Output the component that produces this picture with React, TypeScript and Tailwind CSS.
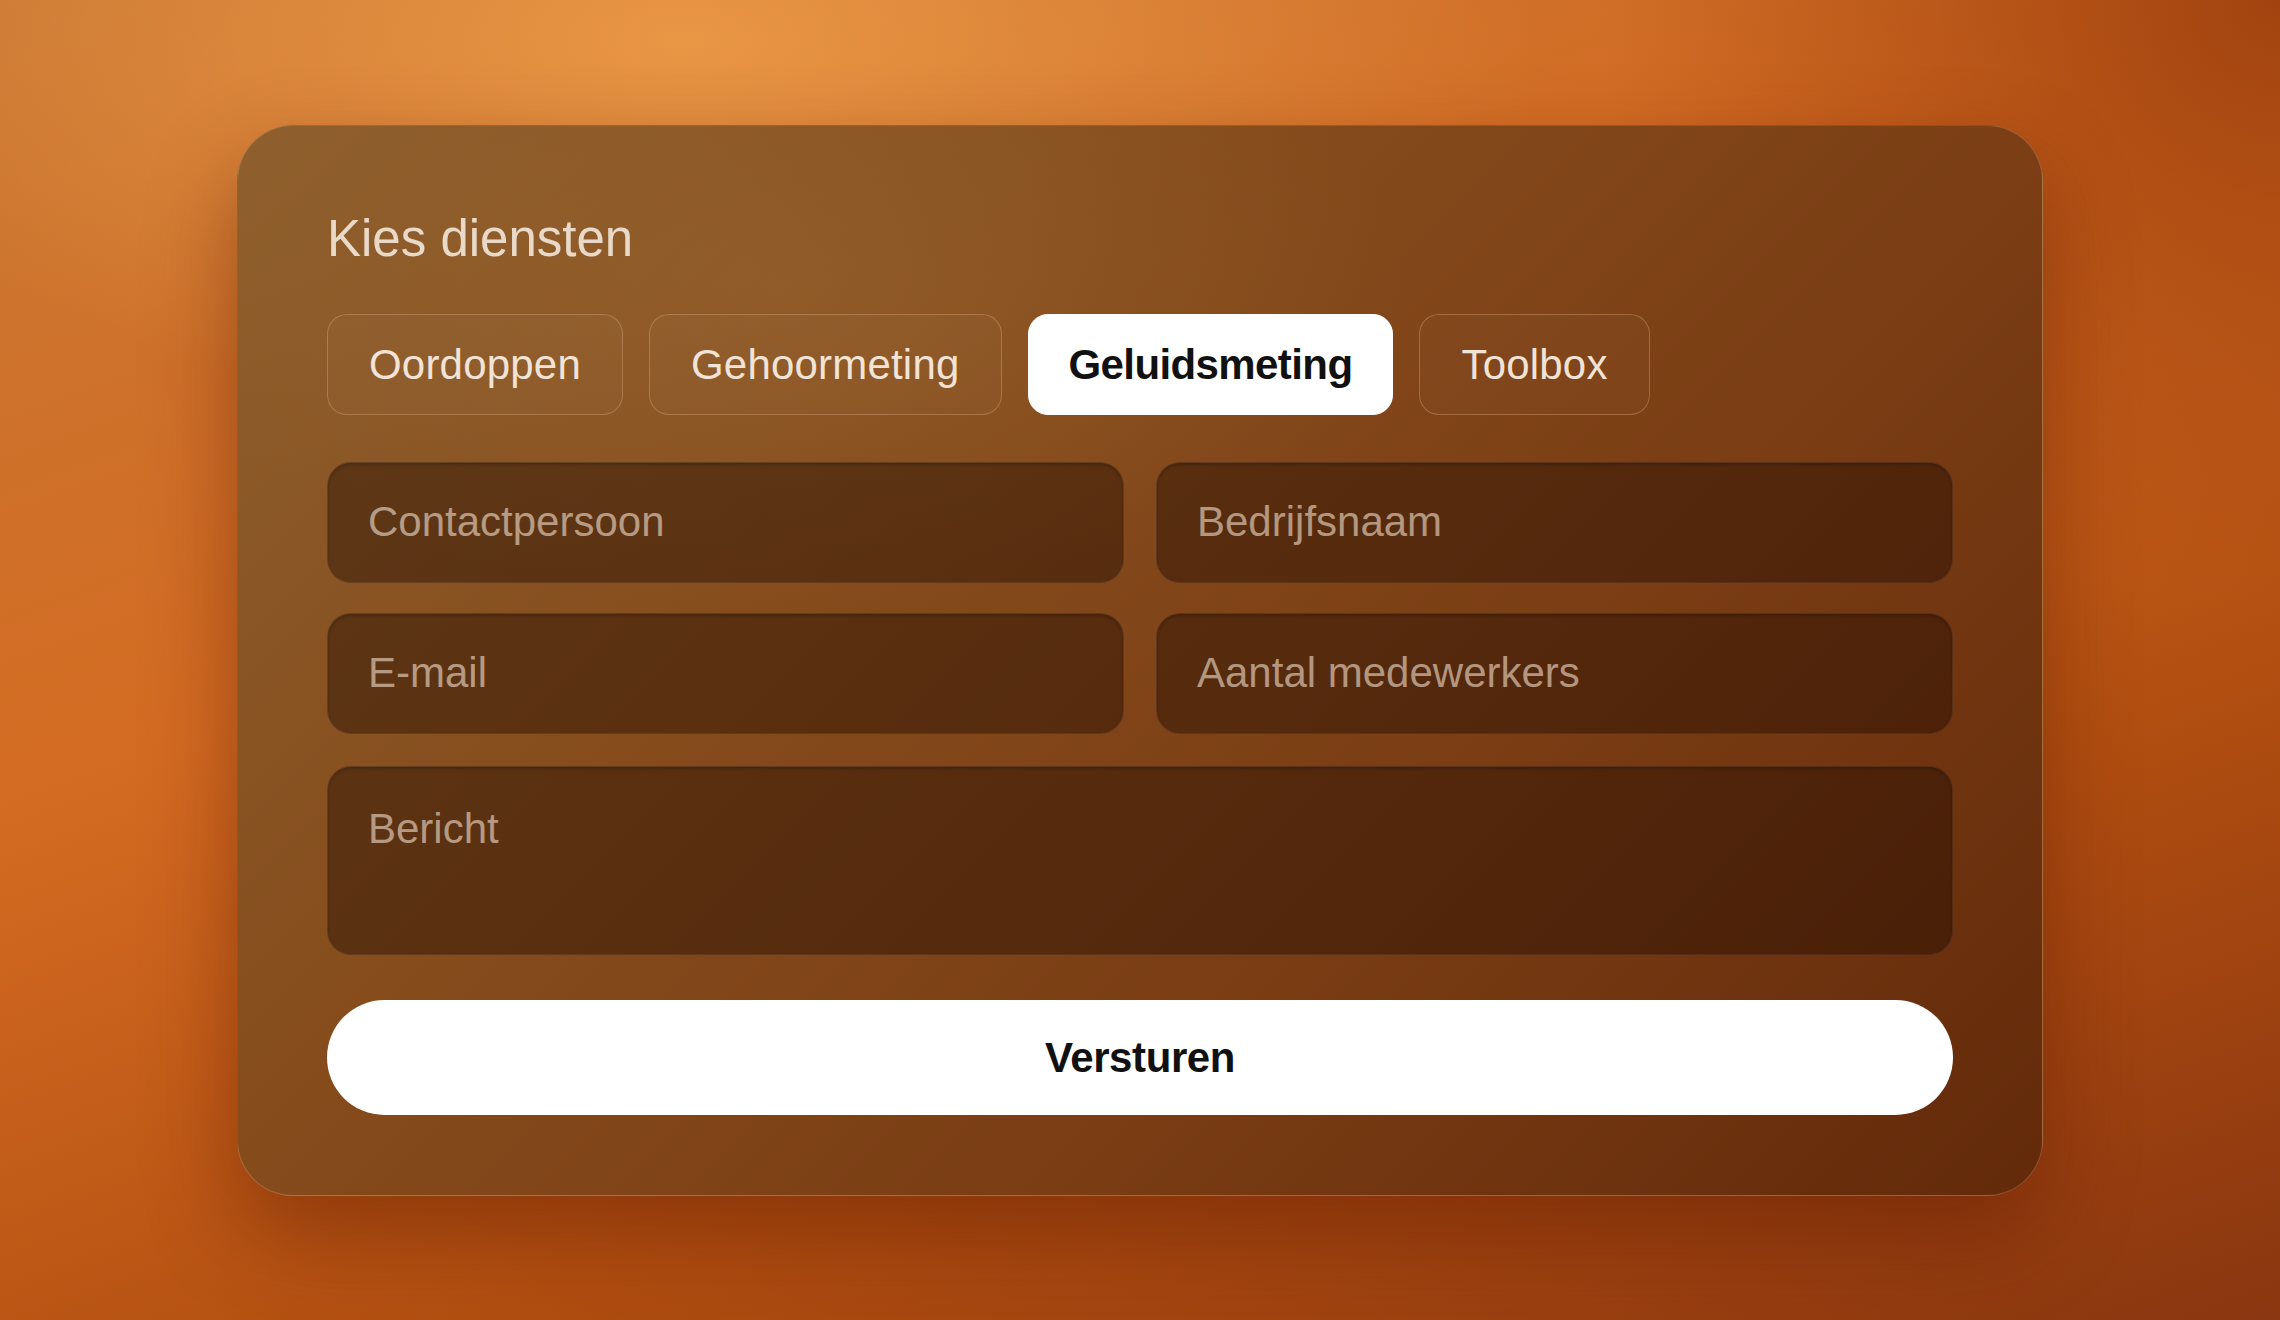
import { useState } from "react";
import clsx from "clsx";

const services = ["Oordoppen", "Gehoormeting", "Geluidsmeting", "Toolbox"];

const fieldClass = `
  h-[121px]
  w-full
  rounded-[24px]
  border
  border-[#ffffff0f]
  bg-[#1a0800]/40
  px-[40px]
  text-[42px]
  text-[#f5e1d0]
  outline-none
  shadow-[inset_0_2px_3px_rgba(0,0,0,0.22)]
  placeholder:text-[#f5e1d0]/60
`;

const App = () => {
  const [selected, setSelected] = useState("Geluidsmeting");

  return (
    <div
      className="
        flex
        min-h-screen
        w-full
        items-center
        justify-center
        bg-[radial-gradient(ellipse_38%_30%_at_30%_3%,#e99645_0%,transparent_100%),radial-gradient(ellipse_30%_45%_at_100%_0%,#a2430f_0%,transparent_100%),linear-gradient(160deg,#c97834_0%,#d46b22_38%,#b14e10_70%,#8a3610_100%)]
      "
      style={{ fontFamily: '"Liberation Sans", Arial, sans-serif' }}
    >
      <div
        className="
          relative
          w-[1806px]
          overflow-hidden
          rounded-[56px]
          border
          border-[#f7c49a]/25
          bg-[linear-gradient(135deg,#8e5f2d_0%,#864c1c_35%,#7a3d14_65%,#632a0a_100%)]
          px-[89px]
          pt-[83px]
          pb-[80px]
          shadow-[0_40px_90px_rgba(90,25,0,0.45)]
        "
      >
        <div className="pointer-events-none absolute inset-0 bg-[radial-gradient(ellipse_35%_30%_at_30%_15%,rgba(160,110,55,0.35)_0%,transparent_100%)]" />

        <div className="relative">
          <h2 className="h-[60px] text-[51px] leading-[60px] font-normal text-[#e9d9c9]">
            Kies diensten
          </h2>

          <div className="mt-[45px] flex gap-[26px]">
            {services.map((service) => (
              <button
                key={service}
                onClick={() => setSelected(service)}
                className={clsx(
                  "h-[101px] rounded-[20px] border text-[42px] transition",
                  selected === service
                    ? "border-white bg-white px-[40px] font-semibold tracking-[-0.6px] text-[#111111]"
                    : "border-[#f3c49c]/30 bg-white/[0.02] px-[41px] tracking-[0.2px] text-[#f1e3d6]"
                )}
              >
                {service}
              </button>
            ))}
          </div>

          <div className="mt-[47px] grid grid-cols-2 gap-x-[32px] gap-y-[30px]">
            <input className={fieldClass} placeholder="Contactpersoon" />
            <input className={fieldClass} placeholder="Bedrijfsnaam" />
            <input className={fieldClass} placeholder="E-mail" />
            <input className={fieldClass} placeholder="Aantal medewerkers" />
          </div>

          <textarea
            className="
              mt-[32px]
              block
              h-[189px]
              w-full
              resize-none
              rounded-[24px]
              border
              border-[#ffffff0f]
              bg-[#1a0800]/40
              px-[40px]
              pt-[37px]
              text-[42px]
              leading-[50px]
              text-[#f5e1d0]
              outline-none
              shadow-[inset_0_2px_3px_rgba(0,0,0,0.22)]
              placeholder:text-[#f5e1d0]/60
            "
            placeholder="Bericht"
          />

          <button
            className="
              mt-[45px]
              flex
              h-[115px]
              w-full
              items-center
              justify-center
              rounded-full
              bg-white
              text-[42px]
              font-semibold
              tracking-[-0.4px]
              text-[#111111]
            "
          >
            Versturen
          </button>
        </div>
      </div>
    </div>
  );
};

export default App;
